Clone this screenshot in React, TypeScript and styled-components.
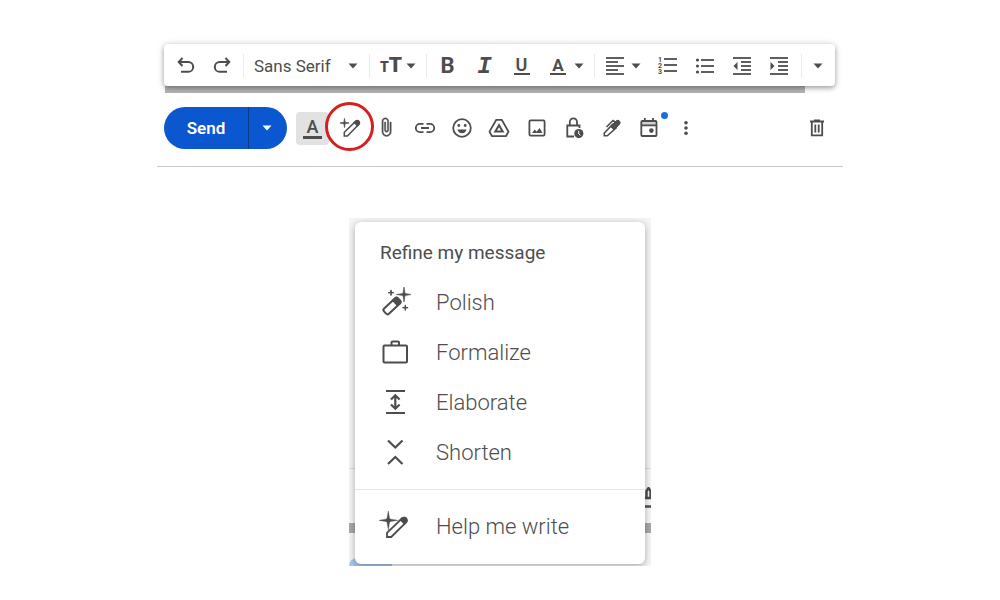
import React from "react";
import styled, { createGlobalStyle, css } from "styled-components";

const ink = "#4d4d4d";
const sans = `Roboto, "Liberation Sans", sans-serif`;

const GlobalStyle = createGlobalStyle`
  *, *::before, *::after { box-sizing: border-box; }
  body { margin: 0; background: #fff; font-family: ${sans}; color: ${ink}; }
  button, select { font: inherit; color: inherit; border: 0; background: none; padding: 0; margin: 0; cursor: pointer; }
`;

const Page = styled.main`
  display: flex;
  flex-direction: column;
  align-items: center;
  gap: 51px;
  padding: 44px 16px 32px;
`;

const Compose = styled.section`
  width: 100%;
  max-width: 686px;
  padding: 0 8px 15px 7px;
  border-bottom: 1px solid #c8c8c8;
`;

const FormatBar = styled.div`
  position: relative;
  display: flex;
  align-items: center;
  height: 42px;
  padding: 1px 3px 0;
  border-radius: 4px;
  background: #fff;
  box-shadow: 0 2px 5px rgba(0, 0, 0, 0.34), 0 0 8px rgba(0, 0, 0, 0.1);
`;

const ScrollTrack = styled.div`
  height: 7px;
  margin: 0 30px 14px 1px;
  background: #b4b4b4;
`;

const Divider = styled.span<{ $push?: boolean }>`
  flex: none;
  width: 1px;
  height: 24px;
  margin: 0 2px;
  background: #ebebeb;
  ${(p) => p.$push && css`margin-left: auto;`}
`;

const ToolButton = styled.button`
  flex: none;
  display: flex;
  align-items: center;
  justify-content: center;
  width: 37px;
  height: 34px;
`;

const MoreButton = styled(ToolButton)`
  width: 28px;
`;

const DropButton = styled.button`
  flex: none;
  display: flex;
  align-items: center;
  gap: 6px;
  width: 52px;
  height: 34px;
  padding-left: 8px;
`;

const FontField = styled.label`
  flex: none;
  display: grid;
  align-items: center;
  width: 121px;
  height: 34px;
  > * { grid-area: 1 / 1; }
  > svg { justify-self: end; margin-right: 9px; pointer-events: none; }
`;

const FontSelect = styled.select`
  appearance: none;
  height: 34px;
  padding-left: 8px;
  font-size: 17px;
  line-height: 20px;
`;

const Glyph = styled.span<{ $size: number; $weight?: number; $line?: boolean }>`
  display: flex;
  justify-content: center;
  min-width: 20px;
  font-size: ${(p) => p.$size}px;
  font-weight: ${(p) => p.$weight ?? 700};
  line-height: 20px;
  ${(p) => p.$line && css`
    min-width: 16px;
    line-height: 16px;
    border-bottom: 2px solid ${ink};
  `}
`;

const ItalicGlyph = styled(Glyph)`
  font-family: "Liberation Mono", monospace;
  font-style: italic;
  padding-top: 2px;
`;

const ColorSlot = styled.span`
  display: flex;
  justify-content: center;
  width: 20px;
`;

const SizeGlyph = styled.span`
  display: flex;
  align-items: baseline;
  width: 20px;
  font-size: 21px;
  font-weight: 900;
  line-height: 20px;
  small { font-size: 14px; }
`;

const ActionBar = styled.div`
  display: flex;
  align-items: center;
  height: 44px;
  padding-bottom: 2px;
`;

const SendGroup = styled.div`
  flex: none;
  display: flex;
  height: 42px;
  border-radius: 21px;
  overflow: hidden;
  background: #0b57d0;
  color: #fff;
`;

const SendButton = styled.button`
  width: 84px;
  font-size: 17px;
  font-weight: 600;
  line-height: 20px;
`;

const SendMenuButton = styled.button`
  display: flex;
  align-items: center;
  justify-content: center;
  width: 39px;
  padding-right: 2px;
  border-left: 1px solid #08398c;
`;

const FormatToggle = styled.button`
  flex: none;
  display: flex;
  justify-content: center;
  align-items: center;
  width: 33px;
  height: 33px;
  margin: 0 2px 0 9px;
  border-radius: 4px;
  background: #e2e2e2;
`;

const ToggleGlyph = styled(Glyph)`
  min-width: 19px;
  line-height: 18px;
  font-weight: 500;
  border-bottom: 3px solid ${ink};
`;

const Actions = styled.div`
  flex: 0 1 374px;
  display: flex;
`;

const ActionButton = styled.button`
  position: relative;
  flex: 1;
  display: flex;
  align-items: center;
  justify-content: center;
  height: 40px;
  padding-bottom: 1px;
`;

const Ring = styled.span`
  position: absolute;
  left: 50%;
  top: 50%;
  width: 49px;
  height: 49px;
  margin: -26px 0 0 -25px;
  border: 3px solid #d4201f;
  border-radius: 50%;
  background: #fff;
`;

const Dot = styled.span`
  position: absolute;
  top: 4px;
  right: 0;
  width: 7px;
  height: 7px;
  border-radius: 50%;
  background: #1a6fe0;
`;

const TrashButton = styled(ToolButton)`
  margin-left: auto;
  padding-bottom: 1px;
`;

const Svg = styled.svg`
  position: relative;
  flex: none;
  display: block;
  fill: none;
  stroke: currentColor;
  stroke-width: 1.8;
`;

const MenuFrame = styled.section`
  position: relative;
  width: 100%;
  max-width: 302px;
  padding: 4px 6px 2px;
  overflow: hidden;
  background: #f4f4f4;
`;

const Backdrop = styled.div`
  position: absolute;
  inset: auto 0 0;
  height: 98px;
  border-top: 1px solid #dcdcdc;
  background: #f6f6f6;
`;

const BackTrack = styled.div`
  position: absolute;
  inset: auto 0 33px;
  height: 10px;
  background: #a8a8a8;
`;

const BackSend = styled.div`
  position: absolute;
  left: 0;
  bottom: 0;
  width: 43px;
  height: 8px;
  border-top-left-radius: 8px;
  background: #a9c4ee;
`;

const BackGlyph = styled.div`
  position: absolute;
  right: 0;
  bottom: 58px;
  width: 6px;
  height: 21px;
`;

const MenuCard = styled.div`
  position: relative;
  padding: 18px 0 12px;
  border-radius: 6px;
  background: #fff;
  box-shadow: 0 2px 7px rgba(0, 0, 0, 0.32);
`;

const MenuTitle = styled.h2`
  margin: 0 0 12px;
  padding-left: 25px;
  font-size: 19px;
  font-weight: 400;
  line-height: 26px;
`;

const MenuItem = styled.button`
  display: flex;
  align-items: center;
  gap: 25px;
  width: 100%;
  height: 50px;
  padding-left: 24px;
  font-size: 22px;
  font-weight: 300;
  line-height: 26px;
  text-align: left;
`;

const MenuRule = styled.hr`
  height: 1px;
  margin: 11px 0 12px;
  border: 0;
  background: #e6e6e6;
`;

type IconProps = { size?: number; box?: number; children: React.ReactNode };
const Icon = ({ size = 24, box = size, children }: IconProps) => (
  <Svg width={size} height={size} viewBox={`0 0 ${box} ${box}`} aria-hidden="true">{children}</Svg>
);

const Caret = () => (
  <Svg width="10" height="6" viewBox="0 0 10 6" aria-hidden="true">
    <path d="M0.5 0.5h9L5 5.5z" fill="currentColor" stroke="none" />
  </Svg>
);

const Lines = ({ rows }: { rows: [number, number, number][] }) => (
  <>{rows.map(([x1, x2, y]) => <path key={y} d={`M${x1} ${y}H${x2}`} />)}</>
);

const star = (x: number, y: number, r: number) => {
  const k = r * 0.14;
  return `M${x} ${y - r}L${x + k} ${y - k}L${x + r} ${y}L${x + k} ${y + k}L${x} ${y + r}L${x - k} ${y + k}L${x - r} ${y}L${x - k} ${y - k}Z`;
};

const indentRows: [number, number, number][] = [[3, 21, 4], [11, 21, 8], [11, 21, 12], [11, 21, 16], [3, 21, 20]];

export default function App() {
  return (
    <>
      <GlobalStyle />
      <Page>
        <Compose>
          <FormatBar role="toolbar" aria-label="Formatting">
            <ToolButton aria-label="Undo">
              <Icon><path d="M8.5 4L4.7 8L8.5 12M5 8H14.3a4.9 4.9 0 0 1 0 9.800H7" strokeWidth="2" /></Icon>
            </ToolButton>
            <ToolButton aria-label="Redo">
              <Icon><path d="M14.500 4L18.300 8L14.500 12M18 8H8.700a4.900 4.900 0 0 0 0 9.800H16" strokeWidth="2" /></Icon>
            </ToolButton>
            <Divider />
            <FontField>
              <FontSelect aria-label="Font"><option>Sans Serif</option></FontSelect>
              <Caret />
            </FontField>
            <Divider />
            <DropButton aria-label="Size"><SizeGlyph><small>T</small>T</SizeGlyph><Caret /></DropButton>
            <Divider />
            <ToolButton aria-label="Bold"><Glyph $size={22}>B</Glyph></ToolButton>
            <ToolButton aria-label="Italic"><ItalicGlyph $size={24}>I</ItalicGlyph></ToolButton>
            <ToolButton aria-label="Underline"><Glyph $size={18} $weight={600} $line>U</Glyph></ToolButton>
            <DropButton aria-label="Text color">
              <ColorSlot><Glyph $size={17} $line>A</Glyph></ColorSlot><Caret />
            </DropButton>
            <Divider />
            <DropButton aria-label="Align">
              <Icon size={20}><Lines rows={[[1, 19, 2], [1, 13, 6], [1, 19, 10], [1, 13, 14], [1, 19, 18]]} /></Icon>
              <Caret />
            </DropButton>
            <ToolButton aria-label="Numbered list">
              <Icon>
                <Lines rows={[[8, 21, 5], [8, 21, 11], [8, 21, 17]]} />
                <g fill="currentColor" stroke="none" fontSize="7" fontWeight="700">
                  <text x="2" y="8">1</text><text x="2" y="14">2</text><text x="2" y="20">3</text>
                </g>
              </Icon>
            </ToolButton>
            <ToolButton aria-label="Bulleted list">
              <Icon>
                <Lines rows={[[8, 21, 6], [8, 21, 12], [8, 21, 18]]} />
                <g fill="currentColor" stroke="none">
                  <circle cx="4.5" cy="6" r="1.6" /><circle cx="4.5" cy="12" r="1.6" /><circle cx="4.5" cy="18" r="1.6" />
                </g>
              </Icon>
            </ToolButton>
            <ToolButton aria-label="Indent less">
              <Icon><Lines rows={indentRows} /><path d="M7.5 8v8L3.5 12z" fill="currentColor" stroke="none" /></Icon>
            </ToolButton>
            <ToolButton aria-label="Indent more">
              <Icon><Lines rows={indentRows} /><path d="M3.5 8v8L7.5 12z" fill="currentColor" stroke="none" /></Icon>
            </ToolButton>
            <Divider $push />
            <MoreButton aria-label="More formatting"><Caret /></MoreButton>
          </FormatBar>
          <ScrollTrack />
          <ActionBar role="toolbar" aria-label="Message actions">
            <SendGroup>
              <SendButton>Send</SendButton>
              <SendMenuButton aria-label="Send options"><Caret /></SendMenuButton>
            </SendGroup>
            <FormatToggle aria-label="Formatting options"><ToggleGlyph $size={18}>A</ToggleGlyph></FormatToggle>
            <Actions>
              <ActionButton aria-label="Help me write">
                <Ring />
                <Icon>
                  <path d={star(6.5, 7, 4.6)} fill="currentColor" strokeWidth="0.7" />
                  <path d="M6.300 20V16.300L17.600 5.400Q19.300 4 20.700 5.400Q22 6.900 20.700 8.400L9.400 20Z" strokeWidth="1.5" />
                  <path d="M16.6 6.4L17.600 5.400Q19.300 4 20.700 5.400Q22 6.900 20.700 8.400L19.5 9.5Z" fill="currentColor" />
                </Icon>
              </ActionButton>
              <ActionButton aria-label="Attach files">
                <Icon size={22} box={26}>
                  <path d="M16.5 6v11.5c0 2.21-1.79 4-4 4s-4-1.79-4-4V5c0-1.38 1.12-2.5 2.5-2.5s2.5 1.12 2.5 2.5v10.5c0 .55-.45 1-1 1s-1-.45-1-1V6H10v9.5c0 1.38 1.12 2.5 2.5 2.5s2.5-1.12 2.5-2.5V5c0-2.21-1.79-4-4-4S7 2.79 7 5v12.5c0 3.04 2.46 5.5 5.5 5.5s5.5-2.46 5.5-5.5V6h-1.5z" fill="currentColor" strokeWidth="0.5" />
                </Icon>
              </ActionButton>
              <ActionButton aria-label="Insert link">
                <Icon><path d="M10.500 7.800H7a4.200 4.200 0 0 0 0 8.400h3.500M13.500 7.800h3.500a4.200 4.200 0 0 1 0 8.400h-3.500M8 12h8" /></Icon>
              </ActionButton>
              <ActionButton aria-label="Insert emoji">
                <Icon>
                  <circle cx="12" cy="12" r="8.8" />
                  <path d="M7.5 13.5h9a4.6 4.6 0 0 1-9 0z" fill="currentColor" stroke="none" />
                  <circle cx="8.8" cy="9.5" r="1.4" fill="currentColor" stroke="none" />
                  <circle cx="15.2" cy="9.5" r="1.4" fill="currentColor" stroke="none" />
                </Icon>
              </ActionButton>
              <ActionButton aria-label="Insert from Drive">
                <Icon>
                  <path d="M9.3 3.8h5.4l6.8 11.8-2.6 4.6H5.1l-2.6-4.6z" strokeLinejoin="round" />
                  <path d="M12 9.2L15.7 15.5H8.3z" strokeWidth="2" />
                </Icon>
              </ActionButton>
              <ActionButton aria-label="Insert photo">
                <Icon>
                  <rect x="4.4" y="4.4" width="15.2" height="15.2" rx="1.3" />
                  <path d="M7 17l2.7-3.6 2 2.3 2.8-3.6L17.5 17z" fill="currentColor" stroke="none" />
                </Icon>
              </ActionButton>
              <ActionButton aria-label="Confidential mode">
                <Icon>
                  <path d="M12 20.5H5.3V9.5H17.5V12M7.8 9.5V6a3.6 3.6 0 0 1 7.2 0V9.5" />
                  <circle cx="16.8" cy="17.6" r="4.6" fill="currentColor" stroke="none" />
                  <path d="M16.7 14.8v3l1.8 1.7" stroke="#fff" strokeWidth="1" />
                </Icon>
              </ActionButton>
              <ActionButton aria-label="Insert signature">
                <Icon>
                  <path d="M4.300 19.800V17L12.500 8.500L16 12L7.300 19.800Z" strokeWidth="1.600" />
                  <path d="M10.500 10.500L16.200 4.800Q18 3.500 19.500 5Q20.700 6.500 19.600 8.200L14 13.800Z" fill="currentColor" strokeWidth="1" />
                  <path d="M6.500 11L13 4.500L15 6" strokeWidth="1.600" />
                </Icon>
              </ActionButton>
              <ActionButton aria-label="Schedule">
                <Icon>
                  <path d="M4.3 5h15.2v4.300H4.300z" fill="#d0d0d0" stroke="none" />
                  <rect x="4.3" y="5" width="15.2" height="15" rx="1" />
                  <path d="M4.3 9.3h15.2M7.8 2v3.4M16 2v3.4" />
                  <circle cx="14.4" cy="14.6" r="2.3" fill="currentColor" stroke="none" />
                </Icon>
                <Dot />
              </ActionButton>
              <ActionButton aria-label="More options">
                <Icon>
                  <g fill="currentColor" stroke="none">
                    <circle cx="12" cy="6.7" r="1.8" /><circle cx="12" cy="12" r="1.8" /><circle cx="12" cy="17.3" r="1.8" />
                  </g>
                </Icon>
              </ActionButton>
            </Actions>
            <TrashButton aria-label="Discard draft">
              <Icon>
                <path d="M5 5.5h14M9 4.4h6M6.8 5.5V19.4H17.2V5.5" />
                <path d="M10.3 8.5v8M13.7 8.5v8" />
              </Icon>
            </TrashButton>
          </ActionBar>
        </Compose>

        <MenuFrame aria-label="Writing help">
          <Backdrop>
            <BackTrack />
            <BackSend />
            <BackGlyph>
              <Svg width="6" height="21" viewBox="0 0 6 21" aria-hidden="true">
                <path d="M1.500 12V4L3.500 1L5.500 4V12M0 11H6M0 19.500H6" strokeWidth="2.400" />
              </Svg>
            </BackGlyph>
          </Backdrop>
          <MenuCard>
            <MenuTitle>Refine my message</MenuTitle>
            <MenuItem>
              <Icon size={32}>
                <path d={star(25, 7.5, 7.5)} fill="currentColor" strokeWidth="0.6" />
                <path d={star(12, 5.7, 2.8)} fill="currentColor" strokeWidth="1" />
                <path d={star(26.3, 20.7, 2.8)} fill="currentColor" strokeWidth="1" />
                <g transform="rotate(-43 13 19)">
                  <rect x="3.500" y="15.500" width="19" height="7" rx="2" strokeWidth="2" />
                  <path d="M17.500 15.500h3q2 0 2 2v3q0 2-2 2h-3z" fill="currentColor" />
                </g>
              </Icon>
              Polish
            </MenuItem>
            <MenuItem>
              <Icon size={32}>
                <rect x="4.5" y="8.500" width="23.500" height="17" rx="1" strokeWidth="2" />
                <path d="M12.500 8.500V5.500Q12.500 4.500 13.500 4.500H19Q20 4.500 20 5.500V8.500" strokeWidth="2" />
              </Icon>
              Formalize
            </MenuItem>
            <MenuItem>
              <Icon size={32}>
                <path d="M7 4H26M7 26H26M16.300 8.500V21.500M12 12.500L16.300 8.300L20.600 12.500M12 17.500L16.300 21.700L20.600 17.500" strokeWidth="2.200" />
              </Icon>
              Elaborate
            </MenuItem>
            <MenuItem>
              <Icon size={32}>
                <path d="M9 3.500L16.300 10.500L23.500 3.500M9 27L16.300 20L23.500 27" strokeWidth="2.200" />
              </Icon>
              Shorten
            </MenuItem>
            <MenuRule />
            <MenuItem>
              <Icon size={32}>
                <path d={star(9.3, 9.3, 10)} fill="currentColor" strokeWidth="0.3" />
                <circle cx="9.300" cy="9.300" r="2.400" fill="currentColor" stroke="none" />
                <path d="M8 26V21.800L23.200 7.300Q25.200 5.800 27 7.500Q28.600 9.300 27 11.300L12.200 26Z" strokeWidth="1.800" />
                <path d="M21.700 8.700L23.200 7.300Q25.200 5.800 27 7.500Q28.600 9.300 27 11.300L25.600 12.700Z" fill="currentColor" />
              </Icon>
              Help me write
            </MenuItem>
          </MenuCard>
        </MenuFrame>
      </Page>
    </>
  );
}
